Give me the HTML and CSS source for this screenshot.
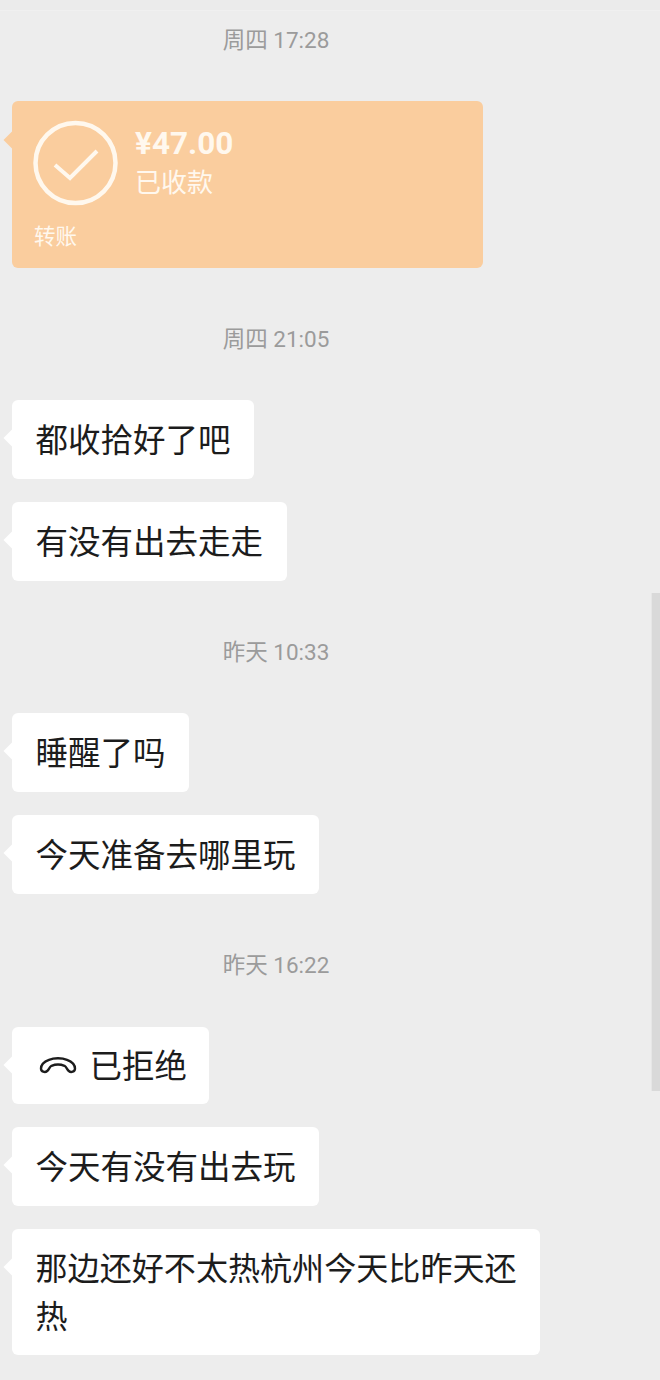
FILE: index.html
```html
<!DOCTYPE html>
<html lang="zh-CN">
<head>
<meta charset="utf-8">
<title>聊天</title>
<link rel="stylesheet" href="styles.css">
</head>
<body>
<div class="screen">
  <div class="top-strip"></div>
  <div class="chat">
    <div class="time">周四 17:28</div>
    <div class="group">
      <div class="bubble transfer">
        <div class="transfer-main">
          <svg class="check" viewBox="0 0 86 86" aria-hidden="true">
            <circle cx="42.5" cy="43" r="40" fill="none" stroke="#fff8ee" stroke-width="4.5"/>
            <path d="M22 45 L37 58 L64 31" fill="none" stroke="#fff8ee" stroke-width="4"/>
          </svg>
          <div class="transfer-text">
            <div class="amount">¥47.00</div>
            <div class="status">已收款</div>
          </div>
        </div>
        <div class="transfer-label">转账</div>
      </div>
    </div>

    <div class="time">周四 21:05</div>
    <div class="group">
      <div class="bubble">都收拾好了吧</div>
      <div class="bubble">有没有出去走走</div>
    </div>

    <div class="time">昨天 10:33</div>
    <div class="group">
      <div class="bubble">睡醒了吗</div>
      <div class="bubble">今天准备去哪里玩</div>
    </div>

    <div class="time">昨天 16:22</div>
    <div class="group group-last">
      <div class="bubble call">
        <svg class="phone" viewBox="0 0 38 18" aria-hidden="true">
          <path d="M2 12.5 C2 8.5 5.5 5.5 10 3.8 C15 1.8 23 1.8 28 3.8 C32.5 5.5 36 8.5 36 12.5 C36 15.8 32 16.8 29.8 15 C28 13.5 27.5 10.8 25.5 9.8 C21.5 8.2 16.5 8.2 12.5 9.8 C10.5 10.8 10 13.5 8.2 15 C6 16.8 2 15.8 2 12.5 Z" fill="none" stroke="#1c1c1c" stroke-width="2.4" stroke-linejoin="round"/>
        </svg>
        <span>已拒绝</span>
      </div>
      <div class="bubble">今天有没有出去玩</div>
      <div class="bubble long">那边还好不太热杭州今天比昨天还热</div>
    </div>
  </div>
  <div class="scrollbar"></div>
</div>
</body>
</html>
```
FILE: styles.css
```css
* { box-sizing: border-box; }

html, body {
  margin: 0;
  padding: 0;
}

body {
  background: #ededed;
  font-family: "Noto Sans CJK SC", "Noto Sans", sans-serif;
}

.screen {
  position: relative;
  width: 660px;
  height: 1380px;
  overflow: hidden;
  background: #ededed;
}

.top-strip {
  height: 11px;
  background: #ebebeb;
  border-bottom: 1px solid #f0f0f0;
}

.chat {
  padding: 14px 0 0 12px;
}

.time {
  width: 528px;
  height: 30px;
  margin-bottom: 46px;
  font-family: "Roboto", "Noto Sans CJK SC", sans-serif;
  font-size: 22.5px;
  line-height: 30px;
  text-align: center;
  color: #9b9b9b;
}

.group {
  display: flex;
  flex-direction: column;
  align-items: flex-start;
  gap: 23px;
  margin-bottom: 56px;
}

.group-last {
  padding-top: 1px;
}

.bubble {
  position: relative;
  max-width: 528px;
  padding: 13.5px 23.7px 17.5px 23.5px;
  border-radius: 6px;
  background: #ffffff;
  color: #1c1c1c;
  font-size: 32.5px;
  line-height: 48px;
}

.bubble::before {
  content: "";
  position: absolute;
  left: -6px;
  top: 32px;
  width: 12px;
  height: 12px;
  background: inherit;
  transform: rotate(45deg);
}

.group-last .bubble {
  padding-bottom: 17px;
}

.bubble.long {
  padding-right: 19px;
  font-size: 32.1px;
}

.group-last .call {
  display: flex;
  align-items: center;
  gap: 13px;
  padding: 12.5px 21.7px 16.5px 23.5px;
}

.phone {
  display: block;
  width: 38px;
  height: 18px;
  margin-left: 3px;
  margin-top: 2px;
}

.transfer {
  width: 471px;
  height: 167px;
  padding: 19px 0 0 21px;
  background: #facd9e;
  color: #fff8ee;
}

.transfer::before {
  top: 33px;
}

.transfer-main {
  display: flex;
  align-items: flex-start;
  gap: 16px;
}

.check {
  display: block;
  width: 86px;
  height: 86px;
}

.transfer-text {
  display: flex;
  flex-direction: column;
  padding-top: 5px;
}

.amount {
  font-family: "Roboto", "Noto Sans", sans-serif;
  font-size: 31.5px;
  font-weight: 700;
  line-height: 38px;
}

.status {
  font-size: 26px;
  line-height: 36px;
}

.transfer-label {
  margin: 14px 0 0 1px;
  font-size: 21.5px;
  line-height: 30px;
}

.scrollbar {
  position: absolute;
  right: 0;
  top: 593px;
  width: 8px;
  height: 498px;
  background: #d9d9d9;
  box-shadow: -1px 0 0 #e6e6e6;
}
```
